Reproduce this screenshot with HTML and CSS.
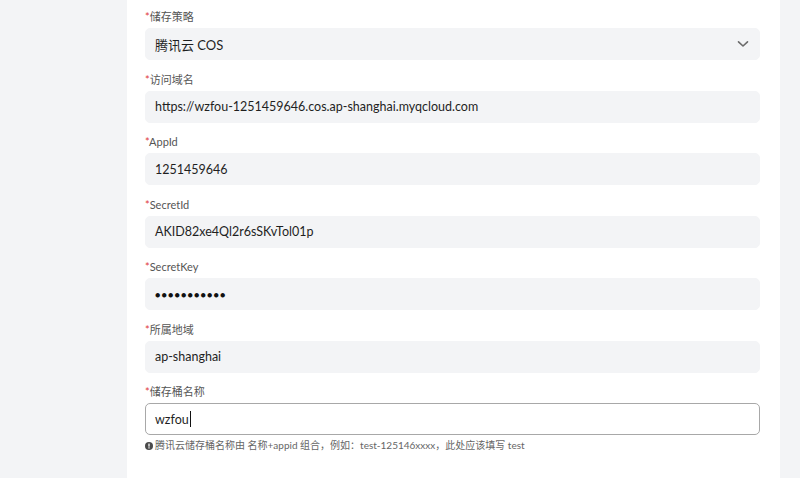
FILE: index.html
```html
<!DOCTYPE html>
<html lang="zh">
<head>
<meta charset="utf-8">
<title>存储设置</title>
<link rel="stylesheet" href="styles.css">
</head>
<body>
<div class="page">
  <div class="panel">
    <div class="field">
      <div class="label"><span class="req">*</span>储存策略</div>
      <div class="input select">
        <span>腾讯云 COS</span>
        <svg class="chev" width="12" height="8" viewBox="0 0 12 8"><path d="M1.5 1.8 L6 6 L10.5 1.8" fill="none" stroke="#6b6b6b" stroke-width="1.6" stroke-linecap="round" stroke-linejoin="round"/></svg>
      </div>
    </div>
    <div class="field">
      <div class="label"><span class="req">*</span>访问域名</div>
      <div class="input">https://wzfou-1251459646.cos.ap-shanghai.myqcloud.com</div>
    </div>
    <div class="field">
      <div class="label"><span class="req">*</span>AppId</div>
      <div class="input">1251459646</div>
    </div>
    <div class="field">
      <div class="label"><span class="req">*</span>SecretId</div>
      <div class="input">AKID82xe4Ql2r6sSKvTol01p</div>
    </div>
    <div class="field">
      <div class="label"><span class="req">*</span>SecretKey</div>
      <div class="input dots">●●●●●●●●●●●</div>
    </div>
    <div class="field">
      <div class="label"><span class="req">*</span>所属地域</div>
      <div class="input">ap-shanghai</div>
    </div>
    <div class="field">
      <div class="label"><span class="req">*</span>储存桶名称</div>
      <div class="input focused">wzfou<span class="caret"></span></div>
      <div class="help">
        <svg class="info" width="8" height="8" viewBox="0 0 10 10"><circle cx="5" cy="5" r="5" fill="#4a4a4a"/><rect x="4.2" y="2" width="1.6" height="3.8" fill="#fff"/><rect x="4.2" y="6.6" width="1.6" height="1.5" fill="#fff"/></svg>
        <span>腾讯云储存桶名称由 名称+appid 组合，例如：test-125146xxxx，此处应该填写 test</span>
      </div>
    </div>
  </div>
</div>
</body>
</html>
```

FILE: styles.css
```css
html, body {
  margin: 0;
  padding: 0;
  background: #f3f4f6;
  font-family: "Lato", "Noto Sans CJK SC", sans-serif;
}
.page {
  display: flex;
  padding-left: 127px;
  padding-right: 20px;
  height: 478px;
  overflow: hidden;
}
.panel {
  flex: 1;
  background: #ffffff;
  padding: 8px 20px 0 18px;
  display: flex;
  flex-direction: column;
  gap: 10.5px;
}
.field {
  display: flex;
  flex-direction: column;
  flex-shrink: 0;
}
.label {
  font-size: 11px;
  line-height: 16px;
  height: 16px;
  padding-top: 1px;
  color: #555;
  margin-bottom: 3px;
}
.req {
  color: #e0393e;
}
.input {
  box-sizing: border-box;
  height: 32px;
  border-radius: 5px;
  background: #f3f4f6;
  border: 1px solid #f3f4f6;
  padding: 0 9px;
  display: flex;
  align-items: center;
  font-size: 12.5px;
  color: #1f1f1f;
}
.select {
  justify-content: space-between;
  padding-right: 10px;
  font-size: 13px;
}
.chev {
  display: block;
}
.dots {
  font-size: 9px;
  letter-spacing: 1.1px;
  color: #111;
}
.focused {
  background: #fff;
  border-color: #a8a8a8;
}
.caret {
  display: inline-block;
  width: 1px;
  height: 16px;
  background: #111;
  margin-left: 1px;
}
.help {
  display: flex;
  align-items: center;
  gap: 2px;
  margin-top: 4px;
  font-size: 10px;
  line-height: 13px;
  color: #666;
}
.info {
  display: block;
}
```
